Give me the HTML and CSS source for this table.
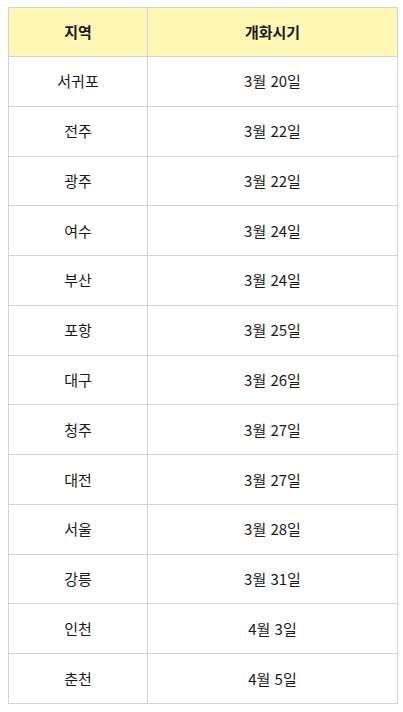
FILE: index.html
```html
<!DOCTYPE html>
<html lang="ko">
<head>
<meta charset="utf-8">
<link rel="stylesheet" href="styles.css">
</head>
<body>
<table class="bloom">
  <colgroup><col class="c1"><col class="c2"></colgroup>
  <thead>
    <tr><th>지역</th><th>개화시기</th></tr>
  </thead>
  <tbody>
    <tr><td>서귀포</td><td>3월 20일</td></tr>
    <tr><td>전주</td><td>3월 22일</td></tr>
    <tr><td>광주</td><td>3월 22일</td></tr>
    <tr><td>여수</td><td>3월 24일</td></tr>
    <tr><td>부산</td><td>3월 24일</td></tr>
    <tr><td>포항</td><td>3월 25일</td></tr>
    <tr><td>대구</td><td>3월 26일</td></tr>
    <tr><td>청주</td><td>3월 27일</td></tr>
    <tr><td>대전</td><td>3월 27일</td></tr>
    <tr><td>서울</td><td>3월 28일</td></tr>
    <tr><td>강릉</td><td>3월 31일</td></tr>
    <tr><td>인천</td><td>4월 3일</td></tr>
    <tr><td>춘천</td><td>4월 5일</td></tr>
  </tbody>
</table>
</body>
</html>
```
FILE: styles.css
```css
html, body {
  margin: 0;
  padding: 0;
  background: #fff;
}
body {
  padding: 7px 0 0 8px;
  font-family: "Noto Sans CJK KR", "Noto Sans", sans-serif;
  font-size: 15px;
  color: #1a1a1a;
}
.bloom {
  border-collapse: collapse;
  width: 389px;
  table-layout: fixed;
}
.bloom th, .bloom td {
  border: 1px solid #d3d3d3;
  text-align: center;
  vertical-align: middle;
  padding: 0;
  line-height: 20px;
}
.bloom th {
  background: #fff7b3;
  font-weight: bold;
  height: 48px;
}
.bloom td {
  height: 48.77px;
}
.c1 { width: 139px; }
.c2 { width: 250px; }
```
